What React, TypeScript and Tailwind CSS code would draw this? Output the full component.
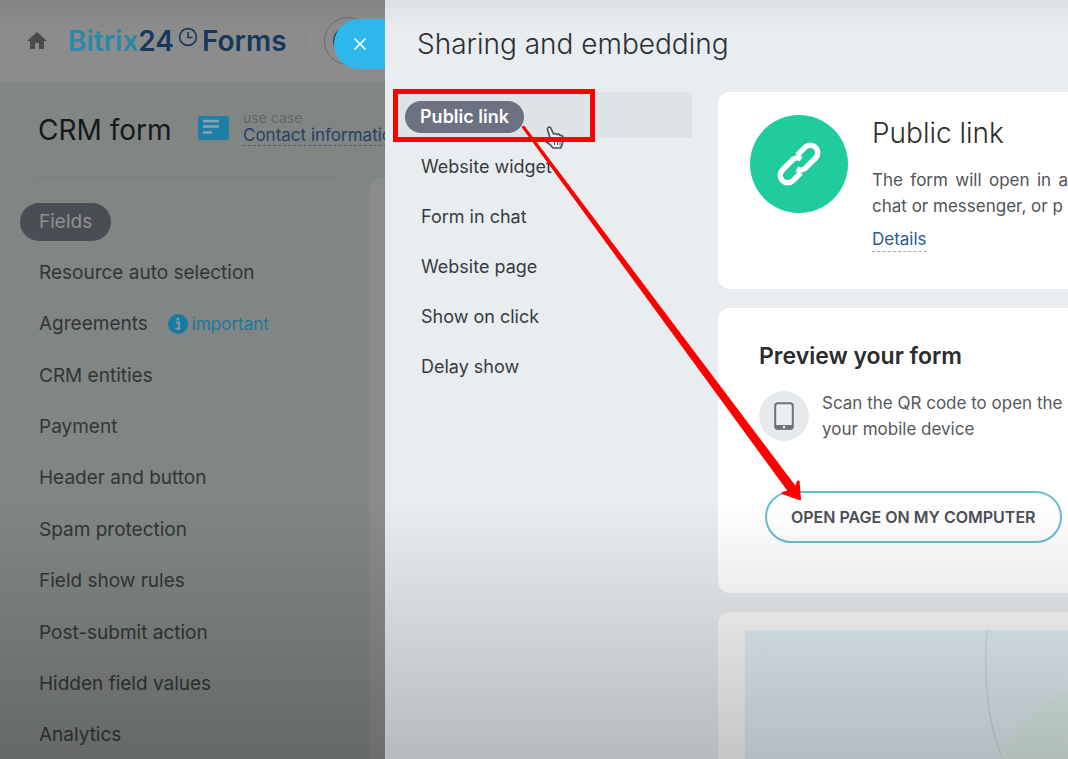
import { MdHome } from "react-icons/md"
import { X } from "lucide-react"

const formSections = [
  "Fields",
  "Resource auto selection",
  "Agreements",
  "CRM entities",
  "Payment",
  "Header and button",
  "Spam protection",
  "Field show rules",
  "Post-submit action",
  "Hidden field values",
  "Analytics",
]

const shareOptions = [
  "Public link",
  "Website widget",
  "Form in chat",
  "Website page",
  "Show on click",
  "Delay show",
]

const Editor = () => {
  return (
    <div className="relative w-[385px] shrink-0 h-full flex flex-col bg-[#818584] overflow-hidden">
      <header className="h-[82px] shrink-0 flex items-center pl-[25px] bg-[#8c8c8c] whitespace-nowrap">
        <MdHome className="size-6 shrink-0 text-[#4b4b4d]" />
        <div className="ml-[19px] flex items-center text-[28px] leading-9 font-semibold text-[#17375d]">
          <span className="text-[#2a88a8]">Bitrix</span>24
          <svg className="size-5 ml-1 mb-2" viewBox="0 0 20 20" fill="none" stroke="#17375d" strokeWidth="1.6">
            <circle cx="10" cy="10" r="8.4" />
            <path d="M10 5V10.5H14.5" />
          </svg>
          <span className="ml-1">Forms</span>
        </div>
        <div className="ml-[18px] h-4 w-px shrink-0 bg-[#838484]" />
        <div className="ml-[18px] size-12 shrink-0 rounded-full border border-[#6c6c6c] p-2">
          <div className="size-full rounded-full border-4 border-[#33444d]" />
        </div>
      </header>

      {/* close tab of the slider */}
      <button
        type="button"
        aria-label="Close"
        className="absolute right-0 top-[19px] h-[50px] w-[51px] rounded-l-full bg-[#2fb8ef] flex items-center justify-center text-white"
      >
        <X className="size-5" strokeWidth={2} />
      </button>

      <div className="flex items-center h-[95px] shrink-0 pl-[38px] whitespace-nowrap">
        <h1 className="w-40 shrink-0 text-[28px] leading-9 text-[#16181a]">CRM form</h1>
        <svg className="w-[31px] h-6 shrink-0 mb-1" viewBox="0 0 31 24">
          <rect width="31" height="24" rx="2" fill="#1e7fa6" />
          <path d="M5 5h16M5 10.500h16M5 16.500h9" stroke="#8fa3aa" strokeWidth="2.4" />
        </svg>
        <div className="ml-[14px] mb-1">
          <p className="text-sm leading-4 text-[#626666]">use case</p>
          <a href="#case" className="block text-[17px] leading-[19px] text-[#263f66] border-b border-dashed border-[#4c5c74]">
            Contact information
          </a>
        </div>
      </div>

      <div className="flex-1 min-h-0 flex">
        <nav className="flex-1 flex flex-col">
          <div className="ml-9 mr-8 h-px bg-[#797d7c]" />
          <ul className="mt-[18px] -mb-0.5 flex-1 flex flex-col">
            {formSections.map((name, i) => (
              <li key={name} className="flex-1 flex items-center pl-5 text-[19px] leading-6">
                <a
                  href="#section"
                  className={
                    i === 0
                      ? "h-[38px] px-[19px] flex items-center rounded-full bg-[#4b4d55] text-[#8f9194]"
                      : "pl-[19px] text-[#313536]"
                  }
                >
                  {name}
                </a>
                {name === "Agreements" && (
                  <span className="ml-5 flex items-center gap-1 text-[17px] text-[#1b7799]">
                    <svg className="size-5" viewBox="0 0 20 20">
                      <circle cx="10" cy="10" r="10" fill="#147ba5" />
                      <path d="M8 8.5h3v6M7.5 14.7h5" stroke="#8b9799" strokeWidth="2" fill="none" />
                      <circle cx="10" cy="5" r="1.6" fill="#8b9799" />
                    </svg>
                    important
                  </span>
                )}
              </li>
            ))}
          </ul>
        </nav>
        <div className="w-[15px] rounded-tl-xl bg-[#8a8b8b]" />
      </div>
    </div>
  )
}

const LinkIcon = () => (
  <svg className="size-[98px] shrink-0" viewBox="0 0 98 98">
    <circle cx="49" cy="49" r="49" fill="#20cb9e" />
    <g transform="translate(49 49) rotate(-45)" fill="none" stroke="#fff" strokeWidth="5.4">
      <path d="M5-7.500H16A7.500 7.500 0 0 1 16 7.500H3A7.500 7.500 0 0 1-5 2" />
      <path d="M5-7.500H16A7.500 7.500 0 0 1 16 7.500H3A7.500 7.500 0 0 1-5 2" transform="rotate(180)" />
    </g>
  </svg>
)

const Sharing = () => {
  return (
    <main className="flex-1 min-w-0 h-full flex flex-col bg-[#e9edf0] overflow-hidden">
      <h2 className="h-[92px] shrink-0 pl-8 pb-1 flex items-center text-[28px] leading-9 font-light text-[#2c3033]">
        Sharing and embedding
      </h2>
      <div className="flex-1 min-h-0 flex gap-[26px]">
        <nav className="w-[307px] shrink-0 pl-2">
          <ul>
            {shareOptions.map((name, i) => (
              <li
                key={name}
                className={
                  i === 0
                    ? "h-[46px] mb-1 flex items-center pl-3 bg-[#dfe3e7] text-lg leading-6"
                    : "h-[50px] flex items-center pl-7 text-lg leading-6"
                }
              >
                <a
                  href="#option"
                  className={
                    i === 0
                      ? "h-8 px-[15px] mt-1 flex items-center rounded-full bg-[#6b7180] font-semibold text-white"
                      : "text-[#373b3f]"
                  }
                >
                  {name}
                </a>
              </li>
            ))}
          </ul>
        </nav>

        <div className="flex-1 min-w-0 flex flex-col gap-[19px] overflow-hidden whitespace-nowrap">
          <section className="h-[197px] shrink-0 flex rounded-l-xl bg-white pl-8 pt-[23px]">
            <LinkIcon />
            <div className="ml-6 flex-1 min-w-0 text-[17px] leading-[26px] text-[#4f5459]">
              <h3 className="text-[28px] leading-9 font-light text-[#2c2e30]">Public link</h3>
              <p className="mt-4 text-justify [text-align-last:justify]">The form will open in a</p>
              <p>chat or messenger, or p</p>
              <a href="#details" className="inline-block mt-2 leading-6 text-[#2a5b95] border-b border-dashed border-[#9aabc4]">
                Details
              </a>
            </div>
          </section>

          <section className="h-[285px] shrink-0 rounded-l-xl bg-white pl-[41px] pt-8">
            <h3 className="text-[23px] leading-8 font-semibold text-[#2a2c2e]">Preview your form</h3>
            <div className="mt-[18px] flex items-center gap-[13px]">
              <span className="size-[50px] shrink-0 rounded-full bg-[#e6eaed] flex items-center justify-center">
                <svg className="w-5 h-7" viewBox="0 0 20 28">
                  <rect x="1.2" y="1.2" width="17.6" height="25.6" rx="2.5" fill="#eceef4" stroke="#6b727b" strokeWidth="2" />
                  <path d="M1 23h18v3a1.5 1.5 0 0 1-1.5 1.5h-15A1.5 1.5 0 0 1 1 26z" fill="#6b727b" />
                  <circle cx="10" cy="25" r="1.2" fill="#fff" />
                </svg>
              </span>
              <p className="text-[17px] leading-[26px] text-[#55595d]">
                Scan the QR code to open the
                <br />
                your mobile device
              </p>
            </div>
            <button
              type="button"
              className="mt-[49px] ml-[6px] h-[52px] px-6 rounded-full border-2 border-[#6bbdd3] bg-transparent text-base font-semibold text-[#4a4f55]"
            >
              OPEN PAGE ON MY COMPUTER
            </button>
          </section>

          <section className="flex-1 rounded-tl-xl bg-[#fbfbfb] pl-[27px] pt-[18px] overflow-hidden">
            <svg className="w-full h-[130px]" viewBox="0 0 324 130" preserveAspectRatio="xMinYMin slice">
              <rect width="324" height="130" fill="#e2f0f5" />
              <path d="M242 0C238 50 242 92 258 130" fill="none" stroke="#cddce4" strokeWidth="1.5" />
              <path d="M256 130C272 94 298 70 324 60V130z" fill="#dff0ea" />
            </svg>
          </section>
        </div>
      </div>
    </main>
  )
}

// red frame, arrow and mouse pointer drawn over the page
const Annotations = () => (
  <svg className="absolute left-0 top-0 w-[1068px] h-[759px] pointer-events-none" viewBox="0 0 1068 759">
    <path
      d="M547.500 129.500a1.800 1.800 0 0 1 3.500-1l2.500 5.500 2.500-.500 1 1 2-.500 1 1.500c3-.500 3.500 2 3 5l-1 4.500-1.500 3h-7.500l-3-3.500-5-3.500c-1.500-2 .500-3.500 3.500-2l2 .500z"
      fill="#eef0f2"
      stroke="#4d5257"
      strokeWidth="1.7"
      strokeLinejoin="round"
    />
    <path d="M554.500 141v4M557.500 141v4M560 141v4" stroke="#4d5257" />
    <rect x="395.5" y="91.5" width="197" height="48" fill="none" stroke="#f00" strokeWidth="5" />
    <path
      d="M522 127L524 126L795.500 486.500L797.500 481H799L800.500 500L782 493.500V492.500L788 491Z"
      fill="#f00"
      stroke="#f00"
      strokeLinejoin="round"
    />
  </svg>
)

const App = () => {
  return (
    <div className="relative h-screen flex overflow-hidden font-['Inter','Liberation_Sans',sans-serif]">
      <Editor />
      <Sharing />
      <div className="absolute inset-0 pointer-events-none bg-[linear-gradient(to_bottom,rgba(0,0,0,0.05),transparent_4%,transparent_66%,rgba(0,0,0,0.21))]" />
      <Annotations />
    </div>
  )
}

export default App
